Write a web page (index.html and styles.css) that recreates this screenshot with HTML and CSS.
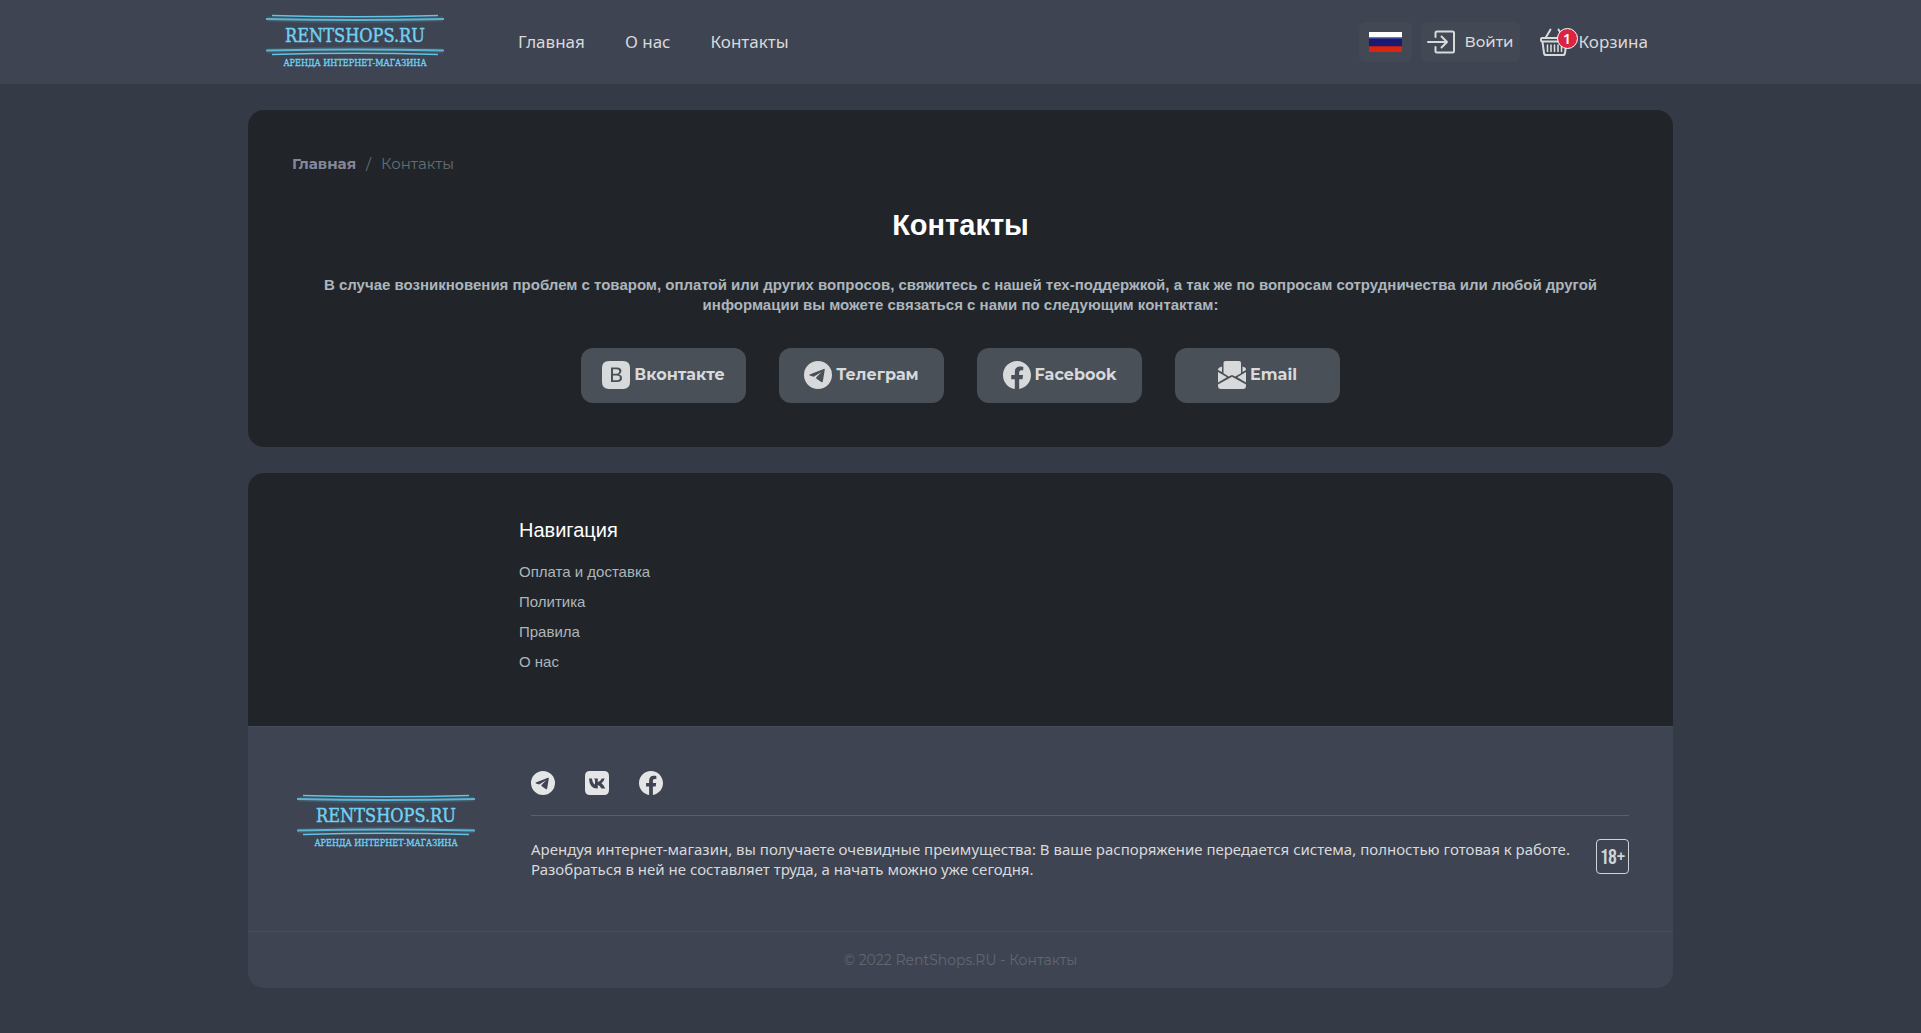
FILE: index.html
```html
<!DOCTYPE html>
<html lang="ru">
<head>
    <meta charset="UTF-8">
    <meta name="viewport" content="width=device-width, initial-scale=1.0">
    <title>Контакты - RentShops.RU</title>
    <link rel="stylesheet" href="styles.css">
</head>
<body>
    <!-- Shared icons -->
    <svg class="sprite" aria-hidden="true">
        <symbol id="logo" viewBox="0 0 178 56">
            <g fill="none" stroke="#62c4e6">
                <g stroke-width="5" opacity="0.15">
                    <path d="M1 5Q89 9 177 5M1 37Q89 33 177 37"/>
                </g>
                <path stroke-width="1.3" d="M6 1.500Q89 4 172 1.500M6 40.500Q89 38 172 40.500"/>
                <path stroke-width="1.900" opacity="0.85" d="M0 5Q89 7 178 5M0 36.500Q89 34.500 178 36.500"/>
            </g>
            <text class="logo-name" x="89" y="28" text-anchor="middle">RENTSHOPS.RU</text>
            <text class="logo-sub" x="89" y="52" text-anchor="middle">АРЕНДА ИНТЕРНЕТ-МАГАЗИНА</text>
        </symbol>
        <symbol id="telegram" viewBox="0 0 28 28">
            <path fill-rule="evenodd" d="M14 0a14 14 0 1 1 0 28a14 14 0 0 1 0-28zM5.600 13.500Q5 14 5.700 14.500L9.600 15.800L17.600 10.900L12.300 16.300Q11.800 17.200 12.500 17.800L17.600 21.300Q18.500 21.600 18.800 20.600L20.800 8.600Q20.800 7.600 19.800 7.900Z"/>
        </symbol>
        <symbol id="facebook" viewBox="0 0 16 16">
            <path d="M16 8.049c0-4.446-3.582-8.05-8-8.05C3.58 0-.002 3.603-.002 8.05c0 4.017 2.926 7.347 6.75 7.951v-5.625h-2.03V8.05H6.75V6.275c0-2.017 1.195-3.131 3.022-3.131.876 0 1.791.157 1.791.157v1.98h-1.009c-.993 0-1.303.621-1.303 1.258v1.51h2.218l-.354 2.326H9.25V16c3.824-.604 6.75-3.934 6.75-7.951z"/>
        </symbol>
    </svg>

    <header class="header">
        <div class="container header-inner">
            <a href="#" class="header-logo" aria-label="RentShops.RU">
                <svg class="logo"><use href="#logo"/></svg>
            </a>
            <nav class="menu">
                <a href="#">Главная</a>
                <a href="#">О нас</a>
                <a href="#">Контакты</a>
            </nav>
            <div class="header-tools">
                <button type="button" class="tool lang" aria-label="Русский">
                    <svg width="33" height="20" viewBox="0 0 33 20">
                        <defs>
                            <linearGradient id="flag-blue" x1="0" y1="0" x2="0" y2="1">
                                <stop offset="0" stop-color="#8d8fc6"/>
                                <stop offset="0.250" stop-color="#171a72"/>
                                <stop offset="1" stop-color="#1e1a72"/>
                            </linearGradient>
                        </defs>
                        <path fill="#fff" d="M0 0h33v6H0z"/>
                        <path fill="url(#flag-blue)" d="M0 5h33v9H0z"/>
                        <path fill="#da2610" d="M0 14h33v6H0z"/>
                        <path fill="#b01c1c" d="M0 14h33v1H0z"/>
                    </svg>
                </button>
                <button type="button" class="tool login">
                    <svg width="28" height="24" viewBox="0 0 28 24" fill="none" stroke="currentColor" stroke-width="2" stroke-linecap="round" stroke-linejoin="round">
                        <path d="M8.500 7V3Q8.500 1.500 10 1.500H25.500Q27 1.500 27 3V21Q27 22.500 25.500 22.500H10Q8.500 22.500 8.500 21V17"/>
                        <path d="M1 12H20M14.500 6.500L20 12L14.500 17.500"/>
                    </svg>
                    <span>Войти</span>
                </button>
                <a href="#" class="cart">
                    <span class="cart-icon">
                        <svg width="29" height="28" viewBox="0 0 29 28" fill="none" stroke="currentColor" stroke-width="2" stroke-linecap="round" stroke-linejoin="round">
                            <path d="M10.500 1.500L5.500 10M18.500 1.500L23.500 10"/>
                            <path d="M2 10H27Q28 10 28 11V12Q28 13.500 26.500 13.500H2.500Q1 13.500 1 12V11Q1 10 2 10Z"/>
                            <path d="M2.500 14L4 25Q4.300 27 6 27H23Q24.700 27 25 25L26.500 14"/>
                            <path stroke-width="1.600" d="M7.500 17V23.500M11 17V23.500M14.500 17V23.500M18 17V23.500M21.500 17V23.500"/>
                        </svg>
                        <span class="badge">1</span>
                    </span>
                    <span>Корзина</span>
                </a>
            </div>
        </div>
    </header>

    <main class="container card">
        <nav class="breadcrumb" aria-label="breadcrumb">
            <a href="#">Главная</a>
            <span>/</span>
            <span>Контакты</span>
        </nav>
        <h1>Контакты</h1>
        <p class="lead">В случае возникновения проблем с товаром, оплатой или других вопросов, свяжитесь с нашей тех-поддержкой, а так же по вопросам сотрудничества или любой другой информации вы можете связаться с нами по следующим контактам:</p>
        <div class="contacts">
            <a href="#" class="contact">
                <svg viewBox="0 0 28 28">
                    <path fill-rule="evenodd" d="M7 0H21Q28 0 28 7V21Q28 28 21 28H7Q0 28 0 21V7Q0 0 7 0ZM9 6.500V21H15Q20 21 20 17Q20 14 17 13.400Q19.400 12.600 19.400 10Q19.400 6.500 15 6.500ZM11 8.200H14.700Q17.300 8.200 17.300 10.300Q17.300 12.700 14.500 12.700H11ZM11 14.400H14.800Q17.900 14.400 17.900 16.800Q17.900 19.300 14.800 19.300H11Z"/>
                </svg>
                <span>Вконтакте</span>
            </a>
            <a href="#" class="contact">
                <svg><use href="#telegram"/></svg>
                <span>Телеграм</span>
            </a>
            <a href="#" class="contact">
                <svg><use href="#facebook"/></svg>
                <span>Facebook</span>
            </a>
            <a href="#" class="contact">
                <svg viewBox="0 0 28 28">
                    <path d="M7.500 0H21Q23 0 23 2V12.200L17.300 15.500L14 14L10.700 15.500L5.500 12.200V2Q5.500 0 7.500 0Z"/>
                    <path d="M4 5.500V11L0 9Q0 7 1.500 6.500ZM24.500 5.500L27 6.500Q28 7 28 9L24.500 11Z"/>
                    <path d="M0 11L9 16.200L0 21.500ZM28 11L19.300 16.200L28 21.500Z"/>
                    <path d="M14 15.700L28 23.500V25Q28 28 25 28H3Q0 28 0 25V23.500Z"/>
                </svg>
                <span>Email</span>
            </a>
        </div>
    </main>

    <footer class="container footer">
        <div class="footer-nav">
            <h2>Навигация</h2>
            <ul>
                <li><a href="#">Оплата и доставка</a></li>
                <li><a href="#">Политика</a></li>
                <li><a href="#">Правила</a></li>
                <li><a href="#">О нас</a></li>
            </ul>
        </div>
        <div class="footer-info">
            <a href="#" class="footer-logo" aria-label="RentShops.RU">
                <svg class="logo"><use href="#logo"/></svg>
            </a>
            <div class="footer-text">
                <div class="socials">
                    <a href="#" aria-label="Telegram"><svg><use href="#telegram"/></svg></a>
                    <a href="#" aria-label="VK">
                        <svg viewBox="0 0 24 24">
                            <path fill-rule="evenodd" d="M5 0H19Q24 0 24 5V19Q24 24 19 24H5Q0 24 0 19V5Q0 0 5 0ZM4 7.500Q4.500 17.500 12 17.500H12.800V14Q14.500 14.200 16.500 17.500H20.300Q19 13.800 16.400 12.200Q18.800 10.600 19.700 7.500H16.800Q15.500 10.500 12.800 11V7.500H9L10 9V13.500Q7.500 12.500 7 7.500Z"/>
                        </svg>
                    </a>
                    <a href="#" aria-label="Facebook"><svg><use href="#facebook"/></svg></a>
                </div>
                <div class="about">
                    <p>Арендуя интернет-магазин, вы получаете очевидные преимущества: В ваше распоряжение передается система, полностью готовая к работе. Разобраться в ней не составляет труда, а начать можно уже сегодня.</p>
                    <span class="age">18+</span>
                </div>
            </div>
        </div>
        <div class="copyright">© 2022 RentShops.RU - Контакты</div>
    </footer>
</body>
</html>
```
FILE: styles.css
```css
:root {
    --bg: #343a46;
    --panel: #3e4451;
    --card: #212529;
    --button: #495057;
    --text: #d8d9db;
    --text-muted: #adb5bd;
    --segoe: "Segoe UI", "Noto Sans", sans-serif;
    --arial: Arial, "Liberation Sans", sans-serif;
    --montserrat: Montserrat, Inter, sans-serif;
}

* {
    box-sizing: border-box;
}

body {
    margin: 0;
    background-color: var(--bg);
    color: var(--text);
    font-family: var(--montserrat);
    font-size: 15px;
    line-height: 20px;
}

a {
    color: inherit;
    text-decoration: none;
}

button {
    border: none;
    color: inherit;
    font: inherit;
    cursor: pointer;
}

svg {
    display: block;
    fill: currentColor;
}

.sprite {
    display: none;
}

.container {
    width: calc(100% - 32px);
    max-width: 1425px;
    margin: 0 auto;
}

/* Logo */
.logo {
    width: 178px;
    height: 56px;
}

.logo-name,
.logo-sub {
    fill: #6fd2f5;
    font-family: "DejaVu Serif Condensed", "DejaVu Serif", serif;
}

.logo-name {
    font-size: 18px;
    stroke: #6fd2f5;
    stroke-width: 0.4;
}

.logo-sub {
    font-size: 9px;
    stroke: #6fd2f5;
    stroke-width: 0.3;
}

/* Header */
.header {
    background-color: var(--panel);
}

.header-inner {
    display: flex;
    align-items: center;
    height: 84px;
    padding: 0 25px 0 18px;
}

.menu {
    display: flex;
    gap: 40px;
    margin-left: 74px;
    font-family: var(--segoe);
    font-size: 17px;
}

.header-tools {
    display: flex;
    align-items: center;
    margin-left: auto;
}

.tool {
    display: flex;
    align-items: center;
    height: 40px;
    border-radius: 6px;
    background-color: #424854;
}

.tool svg {
    fill: none;
}

.lang {
    padding: 0 10px;
}

.login {
    gap: 9px;
    margin: 0 20px 0 9px;
    padding: 0 6px;
    font-size: 15px;
    font-weight: 500;
}

.cart {
    display: flex;
    align-items: center;
    gap: 10px;
    font-family: var(--segoe);
    font-size: 17px;
}

.cart-icon {
    position: relative;
}

.cart-icon svg {
    fill: none;
}

.badge {
    position: absolute;
    top: 0;
    right: -9px;
    width: 21px;
    height: 21px;
    border: 1px solid #fff;
    border-radius: 50%;
    background-color: #dc2440;
    color: #fff;
    font-size: 14px;
    font-weight: 600;
    line-height: 19px;
    text-align: center;
}

/* Contacts */
.card {
    margin-top: 26px;
    padding: 44px;
    border-radius: 16px;
    background-color: var(--card);
}

.breadcrumb {
    display: flex;
    gap: 10px;
    color: #666e75;
}

.breadcrumb a {
    color: #85889b;
    font-weight: 700;
}

h1 {
    margin: 31px 0 30px;
    color: #fff;
    font-family: var(--arial);
    font-size: 29px;
    line-height: 40px;
    text-align: center;
}

.lead {
    margin: 0;
    color: var(--text-muted);
    font-family: var(--arial);
    font-weight: 700;
    text-align: center;
}

.contacts {
    display: flex;
    flex-wrap: wrap;
    justify-content: center;
    gap: 33px;
    margin-top: 33px;
}

.contact {
    display: flex;
    align-items: center;
    justify-content: center;
    gap: 4px;
    width: 165px;
    height: 55px;
    padding-bottom: 2px;
    border-radius: 12px;
    background-color: var(--button);
    font-size: 16px;
    font-weight: 700;
}

.contact svg {
    width: 28px;
    height: 28px;
}

/* Footer */
.footer {
    margin: 26px auto;
    border-radius: 16px;
    background-color: var(--panel);
    overflow: hidden;
}

.footer-nav {
    padding: 43px 44px 54px 271px;
    background-color: var(--card);
    color: var(--text-muted);
    font-family: var(--arial);
}

h2 {
    margin: 0 0 18px;
    color: #fff;
    font-size: 20px;
    font-weight: 500;
    line-height: 28px;
}

.footer-nav ul {
    display: grid;
    gap: 10px;
    margin: 0;
    padding: 0;
    list-style: none;
}

.footer-info {
    display: flex;
    gap: 56px;
    padding: 44px 44px 52px 49px;
    border-top: 1px solid #454a58;
}

.footer-logo {
    padding-top: 23px;
}

.footer-text {
    flex: 1;
}

.socials {
    display: flex;
    gap: 30px;
    padding-bottom: 20px;
    border-bottom: 1px solid #5b606c;
    color: #e4e5e6;
}

.socials svg {
    width: 24px;
    height: 24px;
}

.about {
    display: flex;
    align-items: flex-start;
    justify-content: space-between;
    gap: 16px;
    padding-top: 23px;
    font-family: var(--segoe);
}

.about p {
    margin: 0;
}

.age {
    flex: none;
    width: 33px;
    height: 35px;
    border: 1px solid #ced4da;
    border-radius: 4px;
    color: #ced4da;
    font-family: "Bebas Neue", "Liberation Sans Narrow", Roboto, sans-serif;
    font-size: 21px;
    line-height: 35px;
    text-align: center;
}

.copyright {
    padding: 18px 0;
    border-top: 1px solid #474c59;
    color: #616774;
    font-size: 14px;
    text-align: center;
}
```
